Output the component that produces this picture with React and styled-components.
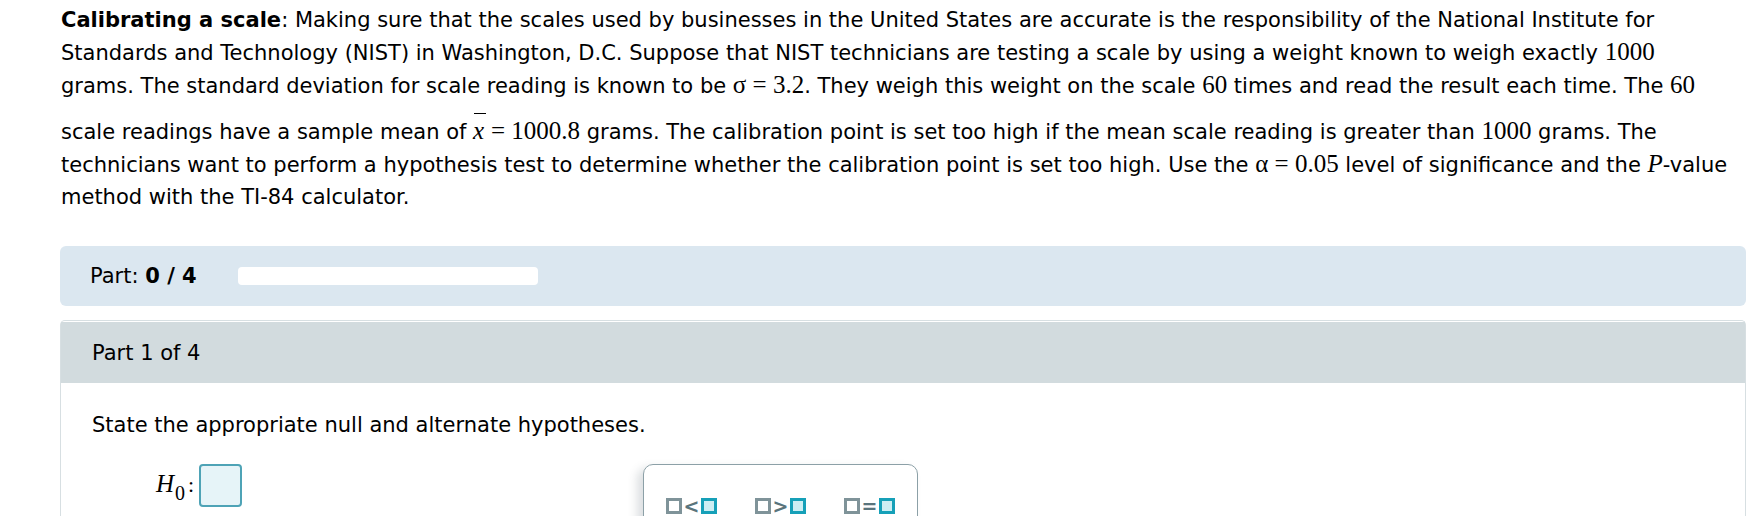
import React from "react";
import styled, { createGlobalStyle } from "styled-components";

const GlobalStyle = createGlobalStyle`
  html, body {
    margin: 0;
    padding: 0;
    background: #ffffff;
  }
  body {
    font-family: "DejaVu Sans", Verdana, sans-serif;
    font-size: 21px;
    color: #000000;
  }
`;

const Page = styled.div`
  padding: 4px 2px 0 60px;
  height: 512px;
  overflow: hidden;
`;

const Problem = styled.p`
  margin: 0 0 0 1px;
  line-height: 32px;
  white-space: nowrap;
`;

const Math = styled.span`
  font-family: "Liberation Serif", "Times New Roman", serif;
  font-size: 25px;
  font-style: ${(p) => (p.italic ? "italic" : "normal")};
`;

const Bar = styled.span`
  display: inline-block;
  line-height: 22px;
  padding-top: 18px;
  position: relative;
  &::before {
    content: "";
    position: absolute;
    left: 1px;
    right: -2px;
    top: 11px;
    border-top: 1px solid #000;
  }
`;

const ProgressPanel = styled.div`
  margin-top: 33px;
  height: 60px;
  border-radius: 6px;
  background: #dbe7f0;
  display: flex;
  align-items: center;
  padding-left: 30px;
`;

const ProgressTrack = styled.div`
  margin-left: 41px;
  width: 300px;
  height: 18px;
  border-radius: 4px;
  background: #ffffff;
`;

const Card = styled.div`
  margin-top: 14px;
  border: 1px solid #d7dfe2;
  border-bottom: 0;
  border-radius: 5px 5px 0 0;
  min-height: 260px;
`;

const CardHeader = styled.div`
  height: 61px;
  margin-top: 1px;
  background: #d2dbde;
  display: flex;
  align-items: center;
  padding-left: 31px;
`;

const CardBody = styled.div`
  padding: 30px 0 0 31px;
`;

const Prompt = styled.div`
  line-height: 24px;
`;

const AnswerArea = styled.div`
  display: flex;
  align-items: flex-start;
  margin-top: 27px;
`;

const Hypotheses = styled.div`
  display: flex;
  flex-direction: column;
  gap: 12px;
  padding-left: 64px;
  width: 399px;
`;

const HypRow = styled.div`
  display: flex;
  align-items: center;
`;

const HLabel = styled.span`
  display: inline-block;
  padding-right: 5px;
  white-space: nowrap;
  font-family: "Liberation Serif", "Times New Roman", serif;
  font-size: 25px;
  line-height: normal;
  font-style: italic;
  margin-top: 4px;
`;

const Sub = styled.span`
  font-style: normal;
  font-size: 20px;
  vertical-align: -8px;
  margin-left: 1px;
`;

const Colon = styled.span`
  font-style: normal;
  font-size: 22px;
  margin-left: 3px;
`;

const AnswerBox = styled.div`
  width: 39px;
  height: 39px;
  border: 2px solid #4ea3b6;
  border-radius: 4px;
  background: #e6f4f8;
`;

const Palette = styled.div`
  margin-left: 88px;
  width: 275px;
  height: 120px;
  border: 1px solid #8ca0a7;
  border-radius: 10px;
  box-shadow: -6px 4px 10px rgba(60, 80, 90, 0.18);
  padding: 33px 0 0 22px;
  display: flex;
  gap: 38px;
  box-sizing: border-box;
`;

const Symbol = styled.div`
  display: flex;
  align-items: center;
  height: 16px;
`;

const Slot = styled.span`
  width: 16px;
  height: 16px;
  box-sizing: border-box;
  border: 3px solid ${(p) => (p.active ? "#16a0b8" : "#7f9399")};
  background: ${(p) => (p.active ? "#cdeef3" : "#ffffff")};
`;

const Operator = styled.span`
  font-family: "DejaVu Sans", sans-serif;
  font-weight: bold;
  font-size: 19px;
  color: #5a747c;
  line-height: 16px;
  width: 19px;
  text-align: center;
`;

const symbols = ["<", ">", "="];

export default function App() {
  return (
    <>
      <GlobalStyle />
      <Page>
        <Problem>
          <b>Calibrating a scale</b>: Making sure that the scales used by businesses in the United States are accurate is the responsibility of the National Institute for
          <br />
          Standards and Technology (NIST) in Washington, D.C. Suppose that NIST technicians are testing a scale by using a weight known to weigh exactly <Math>1000</Math>
          <br />
          grams. The standard deviation for scale reading is known to be <Math>σ = 3.2</Math>. They weigh this weight on the scale <Math>60</Math> times and read the result each time. The <Math>60</Math>
          <br />
          scale readings have a sample mean of <Math italic><Bar>x</Bar></Math> <Math>= 1000.8</Math> grams. The calibration point is set too high if the mean scale reading is greater than <Math>1000</Math> grams. The
          <br />
          technicians want to perform a hypothesis test to determine whether the calibration point is set too high. Use the <Math>α = 0.05</Math> level of significance and the <Math italic>P</Math>-value
          <br />
          method with the TI-84 calculator.
        </Problem>

        <ProgressPanel>
          <span>
            Part: <b>0 / 4</b>
          </span>
          <ProgressTrack />
        </ProgressPanel>

        <Card>
          <CardHeader>Part 1 of 4</CardHeader>
          <CardBody>
            <Prompt>State the appropriate null and alternate hypotheses.</Prompt>
            <AnswerArea>
              <Hypotheses>
                <HypRow>
                  <HLabel>
                    H<Sub>0</Sub>
                    <Colon>:</Colon>
                  </HLabel>
                  <AnswerBox />
                </HypRow>
                <HypRow>
                  <HLabel>
                    H<Sub>1</Sub>
                    <Colon>:</Colon>
                  </HLabel>
                  <AnswerBox />
                </HypRow>
              </Hypotheses>
              <Palette>
                {symbols.map((s) => (
                  <Symbol key={s}>
                    <Slot />
                    <Operator>{s}</Operator>
                    <Slot active />
                  </Symbol>
                ))}
              </Palette>
            </AnswerArea>
          </CardBody>
        </Card>
      </Page>
    </>
  );
}
